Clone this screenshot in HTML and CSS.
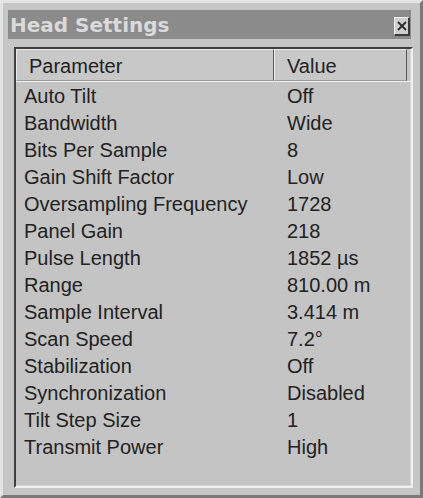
FILE: index.html
```html
<!DOCTYPE html>
<html>
<head>
<meta charset="utf-8">
<link rel="stylesheet" href="styles.css">
</head>
<body>
<div class="window">
  <div class="titlebar">
    <span class="title">Head Settings</span>
    <span class="close">
      <svg width="10" height="10" viewBox="0 0 10 10"><path d="M1 1 L9 9 M9 1 L1 9" stroke="#2a2a2a" stroke-width="1.8" fill="none"/></svg>
    </span>
  </div>
  <div class="listbox">
    <div class="header">
      <div class="hcell hparam">Parameter</div>
      <div class="hcell hvalue">Value</div>
    </div>
    <div class="rows">
      <div class="row"><span class="p">Auto Tilt</span><span class="v">Off</span></div>
      <div class="row"><span class="p">Bandwidth</span><span class="v">Wide</span></div>
      <div class="row"><span class="p">Bits Per Sample</span><span class="v">8</span></div>
      <div class="row"><span class="p">Gain Shift Factor</span><span class="v">Low</span></div>
      <div class="row"><span class="p">Oversampling Frequency</span><span class="v">1728</span></div>
      <div class="row"><span class="p">Panel Gain</span><span class="v">218</span></div>
      <div class="row"><span class="p">Pulse Length</span><span class="v">1852 µs</span></div>
      <div class="row"><span class="p">Range</span><span class="v">810.00 m</span></div>
      <div class="row"><span class="p">Sample Interval</span><span class="v">3.414 m</span></div>
      <div class="row"><span class="p">Scan Speed</span><span class="v">7.2°</span></div>
      <div class="row"><span class="p">Stabilization</span><span class="v">Off</span></div>
      <div class="row"><span class="p">Synchronization</span><span class="v">Disabled</span></div>
      <div class="row"><span class="p">Tilt Step Size</span><span class="v">1</span></div>
      <div class="row"><span class="p">Transmit Power</span><span class="v">High</span></div>
    </div>
  </div>
</div>
</body>
</html>
```
FILE: styles.css
```css
html, body {
  margin: 0;
  padding: 0;
  background: #c6c6c6;
}
.window {
  box-sizing: border-box;
  width: 423px;
  height: 498px;
  background: #c6c6c6;
  border-style: solid;
  border-width: 3px;
  border-color: #e4e4e4 #7a7a7a #7a7a7a #e4e4e4;
  padding: 7px 8px 7px 5px;
  display: flex;
  flex-direction: column;
  font-family: "Liberation Sans", Arial, sans-serif;
  color: #222222;
}
.titlebar {
  height: 29px;
  margin-right: 1px;
  background: #8b8b8b;
  display: flex;
  align-items: center;
  justify-content: space-between;
  padding: 0 1px 0 2px;
}
.title {
  font-family: "DejaVu Sans", sans-serif;
  font-weight: bold;
  font-size: 20px;
  color: #dadada;
  margin-top: 1px;
}
.close {
  box-sizing: border-box;
  width: 16px;
  height: 19px;
  margin-top: 4px;
  background: #cfcfcf;
  border-style: solid;
  border-width: 1px 2px 2px 1px;
  border-color: #f2f2f2 #3a3a3a #3a3a3a #f2f2f2;
  display: flex;
  align-items: center;
  justify-content: center;
}
.listbox {
  flex: 1;
  margin-top: 8px;
  margin-left: 6px;
  margin-right: -1px;
  border-style: solid;
  border-width: 2px;
  border-color: #3e3e3e #f0f0f0 #f0f0f0 #3e3e3e;
  box-shadow: inset -1px -1px 0 #d6d6d6;
  background: #c4c4c4;
  display: flex;
  flex-direction: column;
}
.header {
  display: flex;
  height: 32px;
  border-bottom: 1px solid #f2f2f2;
  padding-right: 4px;
}
.hcell {
  box-sizing: border-box;
  height: 32px;
  line-height: 27px;
  padding-top: 3px;
  font-size: 20px;
  border-style: solid;
  border-width: 1px;
  border-color: #ececec #5a5a5a #9a9a9a #ececec;
  background: #c8c8c8;
}
.hparam {
  width: 258px;
  padding-left: 12px;
}
.hvalue {
  flex: 1;
  padding-left: 12px;
}
.rows {
  display: flex;
  flex-direction: column;
  padding-top: 1px;
}
.row {
  display: flex;
  height: 27px;
  line-height: 27px;
  font-size: 20px;
}
.p {
  width: 263px;
  padding-left: 8px;
}
.v {
  flex: 1;
}
```
